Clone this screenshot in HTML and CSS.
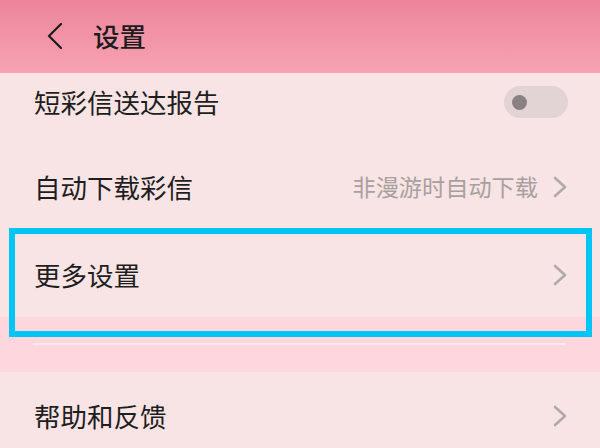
FILE: index.html
```html
<!DOCTYPE html>
<html lang="zh-CN">
<head>
<meta charset="utf-8">
<title>设置</title>
<link rel="stylesheet" href="styles.css">
</head>
<body>
<div class="screen">
  <header class="topbar">
    <svg class="back" width="16" height="26" viewBox="0 0 16 26"><polyline points="14,1 2,13 14,25" fill="none" stroke="#1c1c1c" stroke-width="2.2" stroke-linecap="round" stroke-linejoin="round"/></svg>
    <h1 class="title">设置</h1>
  </header>
  <main class="list">
    <div class="row row-first">
      <span class="label">短彩信送达报告</span>
      <span class="toggle"><span class="knob"></span></span>
    </div>
    <div class="row row-second">
      <span class="label">自动下载彩信</span>
      <span class="trail">
        <span class="value">非漫游时自动下载</span>
        <svg class="chev" width="14" height="22" viewBox="0 0 14 22"><polyline points="2,2 12,11 2,20" fill="none" stroke="#b2aaaa" stroke-width="2.6" stroke-linecap="round" stroke-linejoin="round"/></svg>
      </span>
    </div>
    <div class="row row-third">
      <span class="label">更多设置</span>
      <svg class="chev" width="14" height="22" viewBox="0 0 14 22"><polyline points="2,2 12,11 2,20" fill="none" stroke="#b2aaaa" stroke-width="2.6" stroke-linecap="round" stroke-linejoin="round"/></svg>
    </div>
    <div class="band"><div class="divider"></div></div>
    <div class="row row-fourth">
      <span class="label">帮助和反馈</span>
      <svg class="chev" width="14" height="22" viewBox="0 0 14 22"><polyline points="2,2 12,11 2,20" fill="none" stroke="#b2aaaa" stroke-width="2.6" stroke-linecap="round" stroke-linejoin="round"/></svg>
    </div>
    <div class="highlight"></div>
  </main>
</div>
</body>
</html>
```

FILE: styles.css
```css
html, body {
  margin: 0;
  padding: 0;
}
body {
  width: 600px;
  height: 448px;
  overflow: hidden;
  background: #f8e4e4;
  font-family: "Noto Sans CJK SC", "Noto Sans", sans-serif;
}
.screen {
  width: 600px;
  height: 448px;
  display: flex;
  flex-direction: column;
}
.topbar {
  height: 73px;
  flex: none;
  display: flex;
  align-items: center;
  padding-left: 47px;
  background: linear-gradient(to bottom, #ec849b 0%, #f7a3b3 100%);
}
.back {
  display: block;
  margin-top: -1px;
}
.title {
  margin: 0 0 0 30px;
  font-size: 26.5px;
  font-weight: 500;
  color: #1c1c1c;
  line-height: 1;
}
.list {
  position: relative;
  flex: 1;
  display: flex;
  flex-direction: column;
}
.row {
  flex: none;
  display: flex;
  align-items: center;
  justify-content: space-between;
  padding: 0 33px 0 34px;
}
.label {
  font-size: 26.5px;
  color: #1e1e1e;
  line-height: 1;
}
.row-first { height: 58px; }
.row-second { height: 112px; }
.row-third { height: 74px; padding-bottom: 10px; box-sizing: border-box; }
.row-fourth { height: 88px; }
.toggle {
  width: 64px;
  height: 32px;
  border-radius: 16px;
  background: #e2d4d4;
  display: flex;
  align-items: center;
  padding-left: 8px;
  box-sizing: border-box;
  margin-right: -1px;
}
.knob {
  width: 15px;
  height: 15px;
  border-radius: 50%;
  background: #8a8282;
}
.trail {
  display: flex;
  align-items: center;
  gap: 15px;
}
.value {
  font-size: 23.2px;
  color: #a8a0a0;
  line-height: 1;
}
.chev {
  display: block;
}
.band {
  height: 55px;
  flex: none;
  background: #fdd6de;
  padding: 26px 34px 0 33px;
  box-sizing: border-box;
}
.divider {
  height: 2px;
  background: #fbeaf0;
}
.highlight {
  position: absolute;
  left: 9px;
  top: 155px;
  width: 583px;
  height: 109px;
  border: 6.5px solid #00c6f6;
  box-sizing: border-box;
  pointer-events: none;
}
```
